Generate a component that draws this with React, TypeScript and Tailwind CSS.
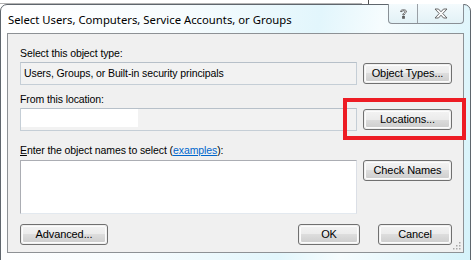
import React from "react";

const ui = { fontFamily: '"Liberation Sans", Arial, sans-serif' };
const title = { fontFamily: '"Noto Sans", "Open Sans", sans-serif' };

function Btn({ children, w }: { children: React.ReactNode; w: string }) {
  return (
    <div className={`${w} h-[21px] shrink-0 rounded-[3px] border border-[#707070] p-px`}>
      <div className="flex h-full w-full items-center justify-center rounded-[2px] border border-[#fcfcfc] bg-[linear-gradient(#f2f2f2_0%,#ebebeb_50%,#dddddd_50%,#cfcfcf_100%)] text-[11px] leading-none tracking-[-0.1px] text-black">
        {children}
      </div>
    </div>
  );
}

export default function App() {
  return (
    <div className="relative h-[260px] w-[473px] overflow-hidden bg-white" style={ui}>
      {/* desktop bits behind */}
      <div className="absolute left-0 top-[3px] h-px w-[362px] bg-[#b4b4b4]" />
      <div className="absolute left-[368px] top-0 h-[5px] w-px bg-[#505050]" />

      <div className="pt-[4px]">
        <div className="relative flex h-[280px] w-[471px] flex-col rounded-t-[7px] border border-[#5f666d] bg-[linear-gradient(100deg,#ffffff_0%,#f7fcfe_35%,#e2f6fc_62%,#f6fcfe_74%,#d4f2fa_100%)]">
          {/* title bar */}
          <div className="flex h-[28px] items-center pl-[7px] pt-[2px]">
            <span className="text-[11.3px] text-black" style={title}>
              Select Users, Computers, Service Accounts, or Groups
            </span>
          </div>

          {/* caption buttons */}
          <div className="absolute right-[6px] top-[-1px] flex h-[20px] overflow-hidden rounded-b-[4px] border border-t-0 border-[#8a9096] bg-[linear-gradient(#f4fbfd,#e2f1f6)]">
            <div className="flex w-[29px] items-center justify-center border-r border-[#9aa0a6]">
              <svg width="9" height="12" viewBox="0 0 9 12">
                <path
                  d="M1.5 3.5 C1.5 1.2 7.5 1.2 7.5 3.5 C7.5 5 5.2 5.3 5.2 7 L3.8 7 C3.8 5 6 4.8 6 3.6 C6 2.4 3 2.4 3 3.6 Z"
                  fill="#fff"
                  stroke="#555"
                  strokeWidth="0.9"
                />
                <rect x="3.6" y="8.5" width="1.8" height="1.8" fill="#fff" stroke="#555" strokeWidth="0.9" />
              </svg>
            </div>
            <div className="flex w-[45px] items-center justify-center">
              <svg width="14" height="11" viewBox="0 0 14 11">
                <path
                  d="M1 1 L4.5 1 L7 3.8 L9.5 1 L13 1 L8.8 5.5 L13 10 L9.5 10 L7 7.2 L4.5 10 L1 10 L5.2 5.5 Z"
                  fill="#fafafa"
                  stroke="#5a5a5a"
                  strokeWidth="0.9"
                  strokeLinejoin="round"
                />
              </svg>
            </div>
          </div>

          {/* content panel */}
          <div className="relative mx-[6px] flex h-[220px] flex-col border border-[#8d9195] bg-[#f0f0f0] pl-[12px] pr-[11px] text-[10.5px] leading-[13px] tracking-[-0.1px] text-black">
            <div className="mt-[13px] h-[13px]">Select this object type:</div>
            <div className="mt-[2px] flex items-center gap-[6px]">
              <div className="flex h-[23px] flex-1 items-center border border-[#c5ced6] border-t-[#b7c0c9] bg-[#f2f2f2] pl-[3px]">
                Users, Groups, or Built-in security principals
              </div>
              <Btn w="w-[89px]">Object Types...</Btn>
            </div>

            <div className="mt-[8px] h-[13px]">From this location:</div>
            <div className="mt-[2px] flex items-center gap-[6px]">
              <div className="flex h-[23px] flex-1 items-start border border-[#c5ced6] border-t-[#b7c0c9] bg-[#f2f2f2]">
                <div className="h-[18px] w-[117px] bg-white" />
              </div>
              <Btn w="w-[89px]">Locations...</Btn>
            </div>

            <div className="mt-[13px] h-[13px]">
              <span className="underline">E</span>nter the object names to select (
              <span className="text-[#0066cc] underline">examples</span>):
            </div>
            <div className="mt-[3px] flex items-start gap-[6px]">
              <div className="h-[54px] flex-1 border border-[#abadb3] border-b-[#e3e9ef] border-r-[#dbdfe6] bg-white" />
              <Btn w="w-[89px]">Check Names</Btn>
            </div>

            <div className="mt-[10px] flex items-center">
              <Btn w="w-[88px]">Advanced...</Btn>
              <div className="flex-1" />
              <Btn w="w-[62px]">OK</Btn>
              <div className="w-[18px]" />
              <Btn w="w-[74px]">Cancel</Btn>
            </div>

            {/* resize grip */}
            <svg className="absolute bottom-[2px] right-[2px]" width="8" height="8" viewBox="0 0 8 8">
              {[
                [6, 0],
                [6, 3],
                [3, 3],
                [6, 6],
                [3, 6],
                [0, 6],
              ].map(([x, y], i) => (
                <rect key={i} x={x} y={y} width="1.5" height="1.5" fill="#a8a8a8" />
              ))}
            </svg>
          </div>
        </div>
      </div>

      {/* red highlight */}
      <div className="absolute left-[343px] top-[98px] h-[42px] w-[123px] border-[4px] border-[#ed1c24]" />
    </div>
  );
}
